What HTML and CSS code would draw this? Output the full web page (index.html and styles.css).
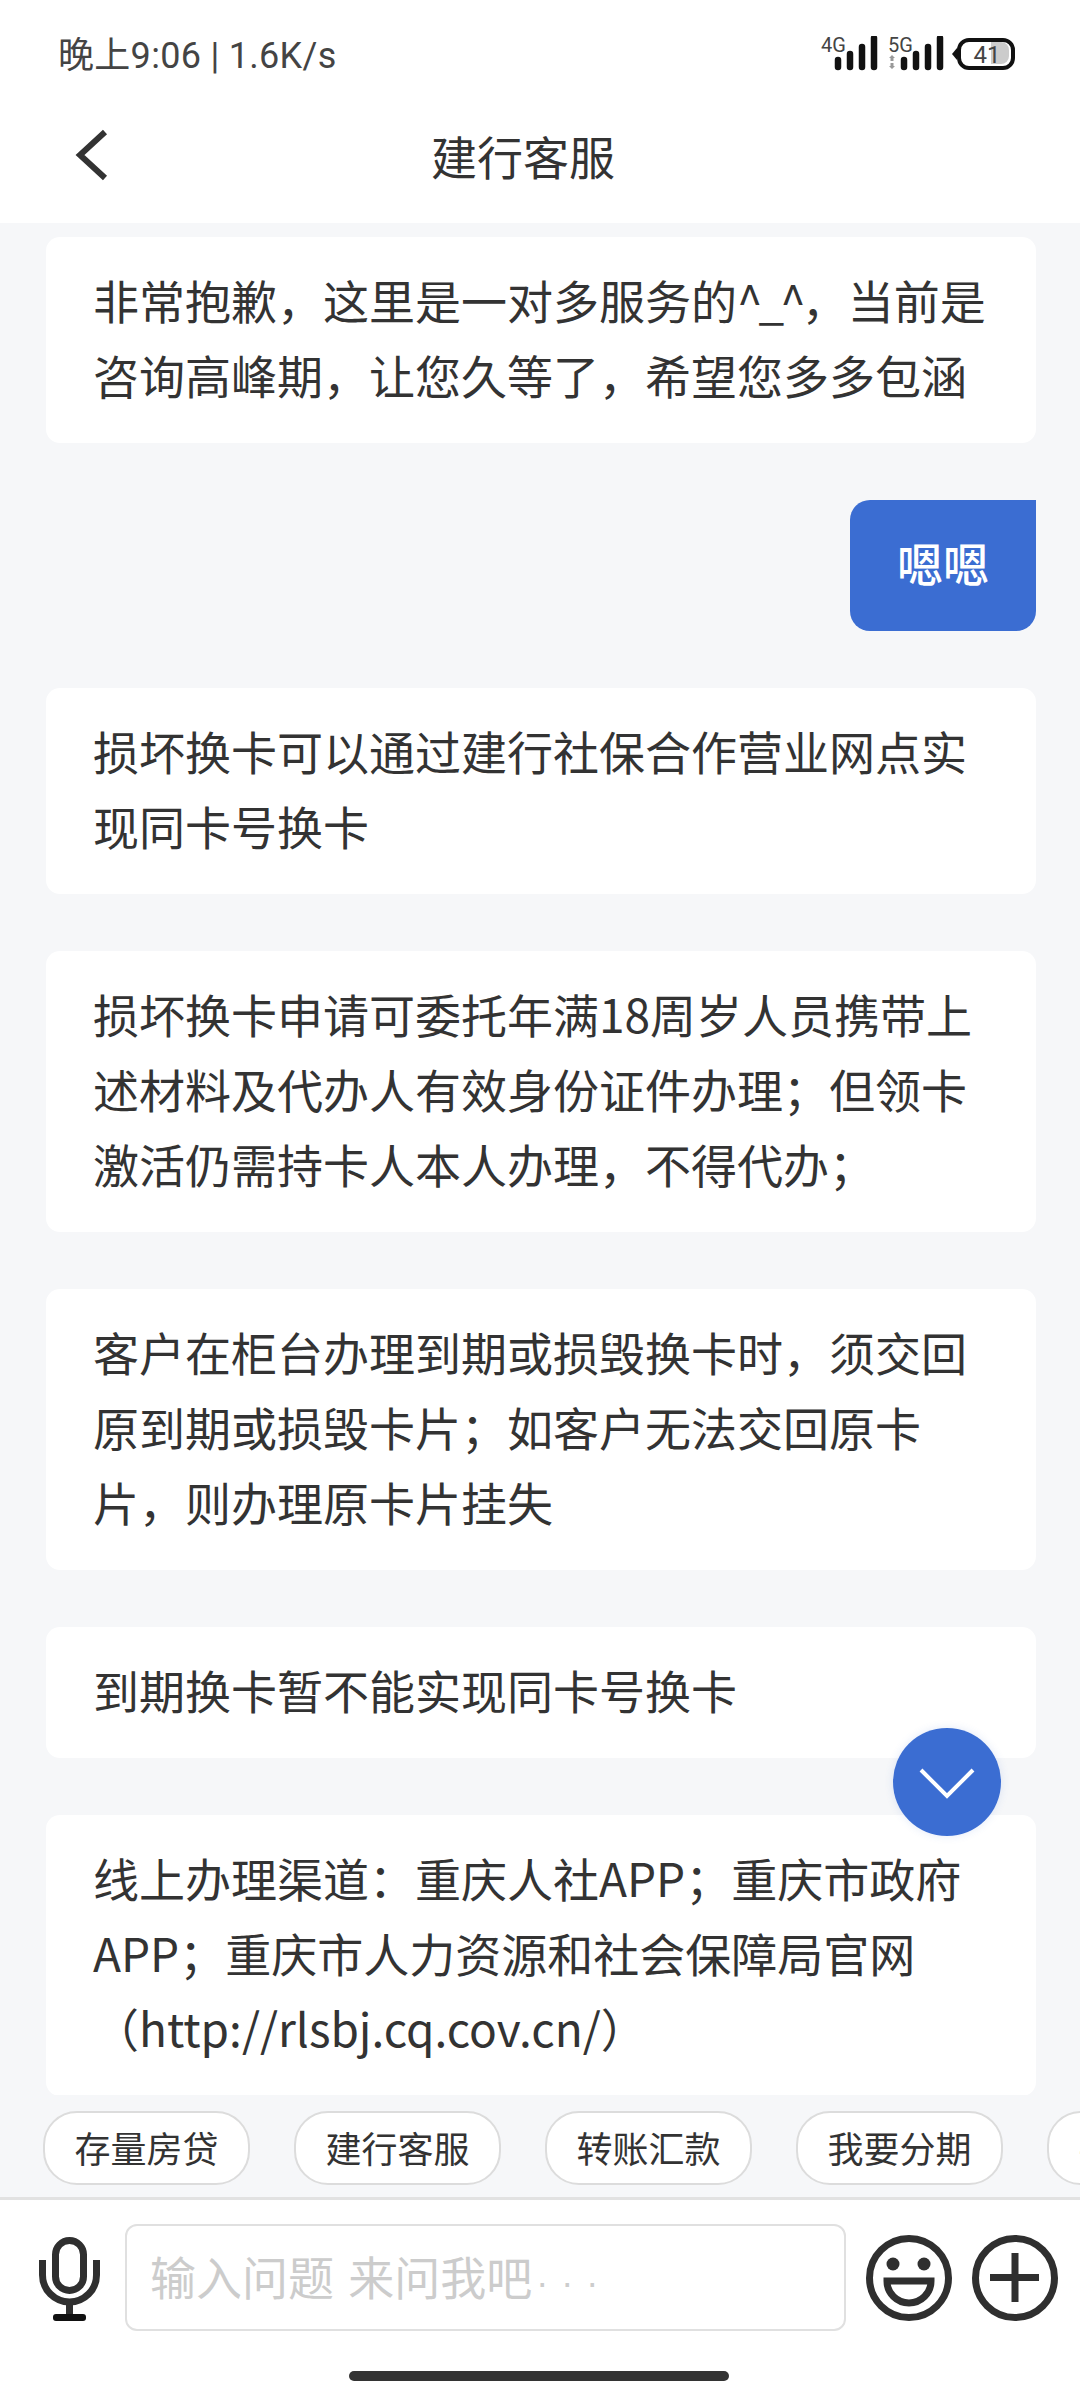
FILE: index.html
```html
<!DOCTYPE html>
<html lang="zh-CN">
<head>
  <meta charset="UTF-8">
  <meta name="viewport" content="width=device-width, initial-scale=1.0">
  <title>建行客服</title>
  <link rel="stylesheet" href="styles.css">
</head>
<body>
  <div class="app">
    <header class="top">
      <div class="status-bar">
        <div class="status-text">晚上9:06 | 1.6K/s</div>
        <svg class="status-icons" width="200" height="40" viewBox="0 0 200 40">
          <text class="net-label" x="0" y="16">4G</text>
          <g class="bars">
            <line x1="17" y1="24" x2="17" y2="31"/>
            <line x1="29" y1="18" x2="29" y2="31"/>
            <line x1="41" y1="11" x2="41" y2="31"/>
            <line x1="53" y1="2" x2="53" y2="31"/>
          </g>
          <text class="net-label" x="67" y="16">5G</text>
          <path class="net-arrows" d="M71 19l3 3h-6zM71 33l3-3h-6z"/>
          <rect class="net-arrows" x="69.500" y="22" width="3" height="3"/>
          <rect class="net-arrows" x="69.500" y="27" width="3" height="3"/>
          <g class="bars">
            <line x1="83" y1="24" x2="83" y2="31"/>
            <line x1="95" y1="18" x2="95" y2="31"/>
            <line x1="107" y1="11" x2="107" y2="31"/>
            <line x1="119" y1="2" x2="119" y2="31"/>
          </g>
          <path class="batt-fill" d="M170 6h10a8 8 0 0 1 8 8v6a8 8 0 0 1-8 8h-10z"/>
          <rect class="batt-body" x="138" y="4" width="54" height="28" rx="10"/>
          <path class="batt-tip" d="M136 12l-5 6 5 6z"/>
          <text class="batt-num" x="166" y="27">41</text>
        </svg>
      </div>
      <nav class="nav">
        <svg class="back" width="34" height="54" viewBox="0 0 34 54">
          <path d="M30 4L5 27l25 23"/>
        </svg>
        <div class="nav-title">建行客服</div>
      </nav>
    </header>

    <main class="messages">
      <div class="msg">非常抱歉，这里是一对多服务的<span class="face">^_^</span>，当前是咨询高峰期，让您久等了，希望您多多包涵</div>
      <div class="msg msg-me">嗯嗯</div>
      <div class="msg">损坏换卡可以通过建行社保合作营业网点实现同卡号换卡</div>
      <div class="msg">损坏换卡申请可委托年满18周岁人员携带上述材料及代办人有效身份证件办理；但领卡激活仍需持卡人本人办理，不得代办；</div>
      <div class="msg">客户在柜台办理到期或损毁换卡时，须交回原到期或损毁卡片；如客户无法交回原卡片，则办理原卡片挂失</div>
      <div class="msg">到期换卡暂不能实现同卡号换卡</div>
      <div class="msg">线上办理渠道：重庆人社APP；重庆市政府APP；重庆市人力资源和社会保障局官网（http://rlsbj.cq.cov.cn/）</div>
    </main>

    <div class="chips">
      <div class="chip">存量房贷</div>
      <div class="chip">建行客服</div>
      <div class="chip">转账汇款</div>
      <div class="chip">我要分期</div>
      <div class="chip">手机银行</div>
    </div>

    <footer class="input-bar">
      <svg class="mic" width="62" height="84" viewBox="0 0 62 84">
        <rect x="16.500" y="3.500" width="28" height="50" rx="14"/>
        <path d="M3.500 23v15a27 27 0 0 0 54 0V23"/>
        <path d="M30.500 68v12"/>
        <rect class="mic-base" x="14" y="77" width="33" height="7" rx="3"/>
      </svg>
      <div class="question"><span>输入问题 来问我吧</span><span class="dots">···</span></div>
      <svg class="round-icon" width="86" height="86" viewBox="0 0 86 86">
        <circle cx="43" cy="43" r="39.500"/>
        <circle class="eye" cx="27" cy="29" r="6.500"/>
        <circle class="eye" cx="58" cy="29" r="6.500"/>
        <path d="M21 46h44a22 22 0 0 1-44 0z"/>
      </svg>
      <svg class="round-icon" width="86" height="86" viewBox="0 0 86 86">
        <circle cx="43" cy="43" r="39.500"/>
        <path d="M43 18v49M18 42.500h49"/>
      </svg>
    </footer>
    <div class="home-row"><div class="home-bar"></div></div>

    <div class="to-bottom">
      <svg width="56" height="32" viewBox="0 0 56 32">
        <path d="M2 2l26 26L54 2"/>
      </svg>
    </div>
  </div>
</body>
</html>
```

FILE: styles.css
```css
* {
  box-sizing: border-box;
}
body {
  margin: 0;
  background-color: #f6f7f9;
  font-family: "Noto Sans CJK SC", "Noto Sans", sans-serif;
  color: #333;
}
.app {
  position: relative;
  width: 1080px;
  height: 2400px;
  display: flex;
  flex-direction: column;
  overflow: hidden;
}

/* top */
.top {
  height: 223px;
  background-color: white;
  flex-shrink: 0;
}
.status-bar {
  height: 100px;
  padding: 28px 0 0 58px;
  display: flex;
  justify-content: space-between;
  align-items: flex-start;
}
.status-text {
  font-family: Roboto, "Noto Sans CJK SC", sans-serif;
  font-size: 36px;
  line-height: 52px;
  letter-spacing: 0.300px;
  color: #444;
  margin-top: 2px;
}
.status-icons {
  margin: 8px 59px 0 0;
}
.net-label {
  font-family: Roboto, sans-serif;
  font-size: 20px;
  fill: #444;
}
.bars line {
  stroke: #111;
  stroke-width: 6.500;
  stroke-linecap: round;
}
.net-arrows {
  fill: #999;
}
.batt-fill {
  fill: #ccc;
}
.batt-body {
  fill: none;
  stroke: #111;
  stroke-width: 4;
}
.batt-tip {
  fill: #111;
}
.batt-num {
  font-family: Roboto, sans-serif;
  font-size: 24px;
  fill: #444;
  text-anchor: middle;
}
.nav {
  height: 123px;
  display: flex;
  align-items: center;
  padding: 0 0 13px 75px;
}
.back path {
  fill: none;
  stroke: #333;
  stroke-width: 6;
}
.nav-title {
  font-size: 46px;
  margin-left: 322px;
  line-height: 60px;
}

/* messages */
.messages {
  flex: 1;
  min-height: 0;
  overflow: hidden;
  display: flex;
  flex-direction: column;
  gap: 57px;
  padding: 14px 44px 0 46px;
}
.msg {
  flex-shrink: 0;
  background-color: white;
  border-radius: 14px;
  padding: 25px 47px 31px;
  font-size: 46px;
  line-height: 75px;
}
.face {
  letter-spacing: -4px;
}
.msg-me {
  align-self: flex-end;
  background-color: #3b6dd2;
  color: white;
  font-weight: 500;
  border-radius: 20px 0 20px 20px;
}

/* quick chips */
.chips {
  display: flex;
  gap: 44px;
  padding: 0 0 12px 43px;
  overflow: hidden;
  flex-shrink: 0;
  margin-top: 16px;
}
.chip {
  flex-shrink: 0;
  width: 207px;
  height: 74px;
  line-height: 68px;
  text-align: center;
  font-size: 36px;
  background-color: white;
  border: 2px solid #dcdcdc;
  border-radius: 34px;
}

/* input */
.input-bar {
  height: 147px;
  flex-shrink: 0;
  background-color: white;
  border-top: 3px solid #e2e2e2;
  display: flex;
  align-items: flex-start;
  padding-left: 39px;
  position: relative;
}
.mic {
  margin: 37px 24px 0 0;
}
.mic rect,
.mic path,
.round-icon circle,
.round-icon path {
  fill: none;
  stroke: #2f2f2f;
  stroke-width: 7;
}
.mic .mic-base {
  fill: #111;
  stroke: none;
}
.question {
  width: 721px;
  height: 107px;
  margin-top: 24px;
  padding-left: 23px;
  border: 2px solid #e0e0e0;
  border-radius: 12px;
  font-size: 46px;
  line-height: 98px;
  word-spacing: 4px;
  color: #ccc;
}
.dots {
  font-family: "Liberation Sans", sans-serif;
  font-size: 36px;
  letter-spacing: 13px;
  margin-left: 4px;
}
.round-icon {
  margin: 35px 0 0 20px;
}
.round-icon .eye {
  fill: #2f2f2f;
  stroke: none;
}
.home-row {
  height: 56px;
  flex-shrink: 0;
  background-color: white;
  padding-top: 27px;
}
.home-bar {
  width: 380px;
  height: 10px;
  margin-left: 349px;
  border-radius: 5px;
  background-color: #333;
}

/* scroll to bottom button */
.to-bottom {
  position: absolute;
  left: 893px;
  top: 1728px;
  width: 108px;
  height: 108px;
  border-radius: 50%;
  background-color: #3b6dd2;
  box-shadow: 0 0 8px rgba(59,109,210,0.15);
  display: flex;
  align-items: center;
  justify-content: center;
}
.to-bottom svg {
  margin-top: 4px;
}
.to-bottom path {
  fill: none;
  stroke: white;
  stroke-width: 4;
}
```
